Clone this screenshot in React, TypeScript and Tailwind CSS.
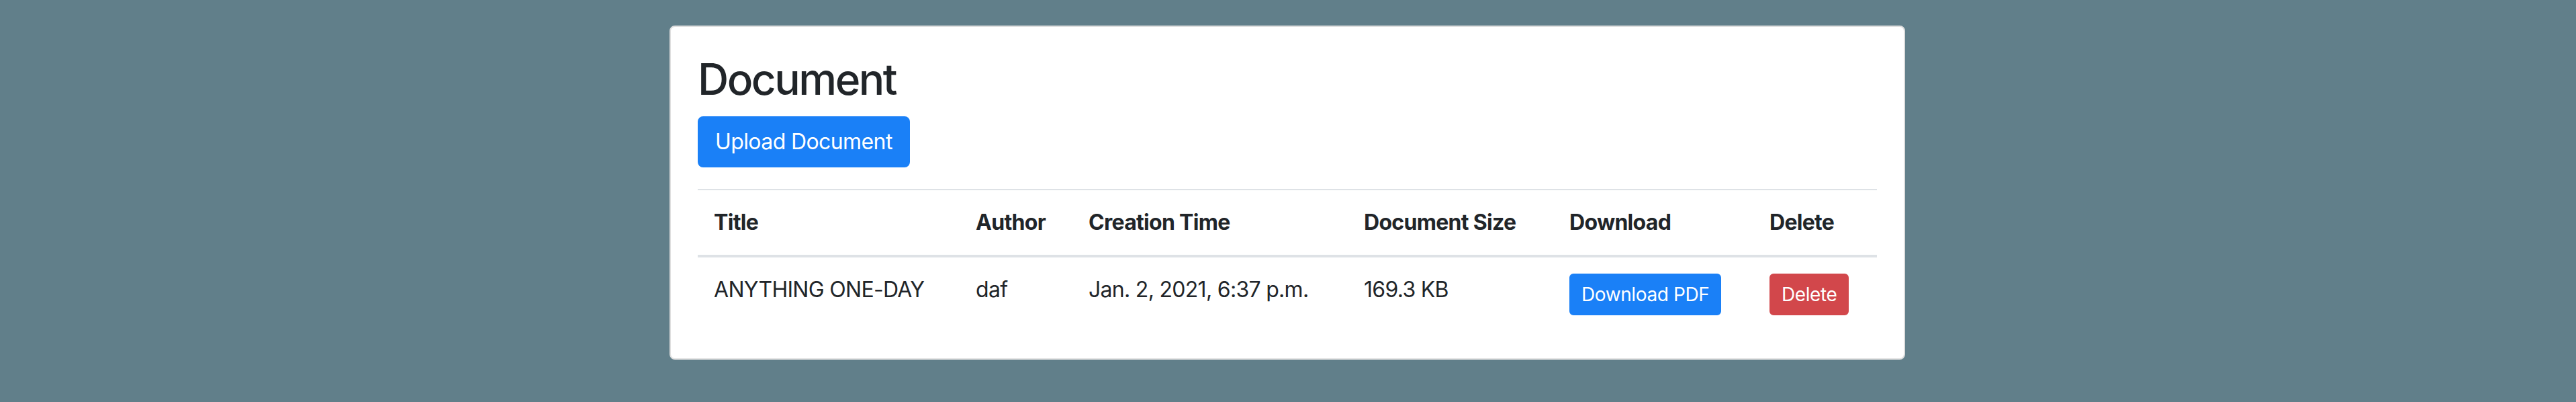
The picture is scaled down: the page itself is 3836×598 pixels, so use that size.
import React from "react";

const columns = [
  { name: "Title", width: "w-[390px]" },
  { name: "Author", width: "w-[168px]" },
  { name: "Creation Time", width: "w-[410px]" },
  { name: "Document Size", width: "w-[306px]" },
  { name: "Download", width: "w-[298px]" },
  { name: "Delete", width: "w-[184px]" },
];

const documents = [
  {
    id: 1,
    title: "ANYTHING ONE-DAY",
    author: "daf",
    created: "Jan. 2, 2021, 6:37 p.m.",
    size: "169.3 KB",
  },
];

export default function App() {
  return (
    <div
      className="min-h-screen w-full bg-[#617f8a] pt-[38px] text-[#212529]"
      style={{ fontFamily: "Inter, 'Noto Sans', 'Liberation Sans', sans-serif" }}
    >
      <div className="mx-auto w-[1840px] -translate-x-px rounded-[8px] border-2 border-[#dfdfdf] bg-white p-[40px]">
        <h2 className="mb-4 text-[64px] font-medium leading-[1.2] tracking-[-2.5px]">Document</h2>

        <div className="flex">
          <button className="rounded-[8px] border-2 border-[#1a80f7] bg-[#1a80f7] px-[24px] py-[12px] text-[32px] leading-[48px] tracking-[-0.6px] text-white">
            Upload Document
          </button>
        </div>

        {/* Documents table */}
        <table className="mt-8 w-full table-fixed border-separate border-spacing-0 text-[32px] leading-[48px] tracking-[-0.7px]">
          <colgroup>
            {columns.map((col) => (
              <col key={col.name} className={col.width} />
            ))}
          </colgroup>
          <thead>
            <tr>
              {columns.map((col) => (
                <th
                  key={col.name}
                  className="border-t-2 border-b-4 border-[#dee2e6] p-6 text-left align-bottom font-bold"
                >
                  {col.name}
                </th>
              ))}
            </tr>
          </thead>
          <tbody>
            {documents.map((doc) => (
              <tr key={doc.id}>
                <td className="p-6 align-top">{doc.title}</td>
                <td className="p-6 align-top">{doc.author}</td>
                <td className="p-6 align-top">{doc.created}</td>
                <td className="p-6 align-top">{doc.size}</td>
                <td className="p-6 align-top">
                  <button className="rounded-[6px] border-2 border-[#1a80f7] bg-[#1a80f7] px-4 py-2 text-[28px] leading-[42px] tracking-[-0.4px] text-white">
                    Download PDF
                  </button>
                </td>
                <td className="p-6 align-top">
                  <button className="rounded-[6px] border-2 border-[#d2474b] bg-[#d2474b] px-4 py-2 text-[28px] leading-[42px] tracking-[-0.4px] text-white">
                    Delete
                  </button>
                </td>
              </tr>
            ))}
          </tbody>
        </table>
      </div>
    </div>
  );
}
